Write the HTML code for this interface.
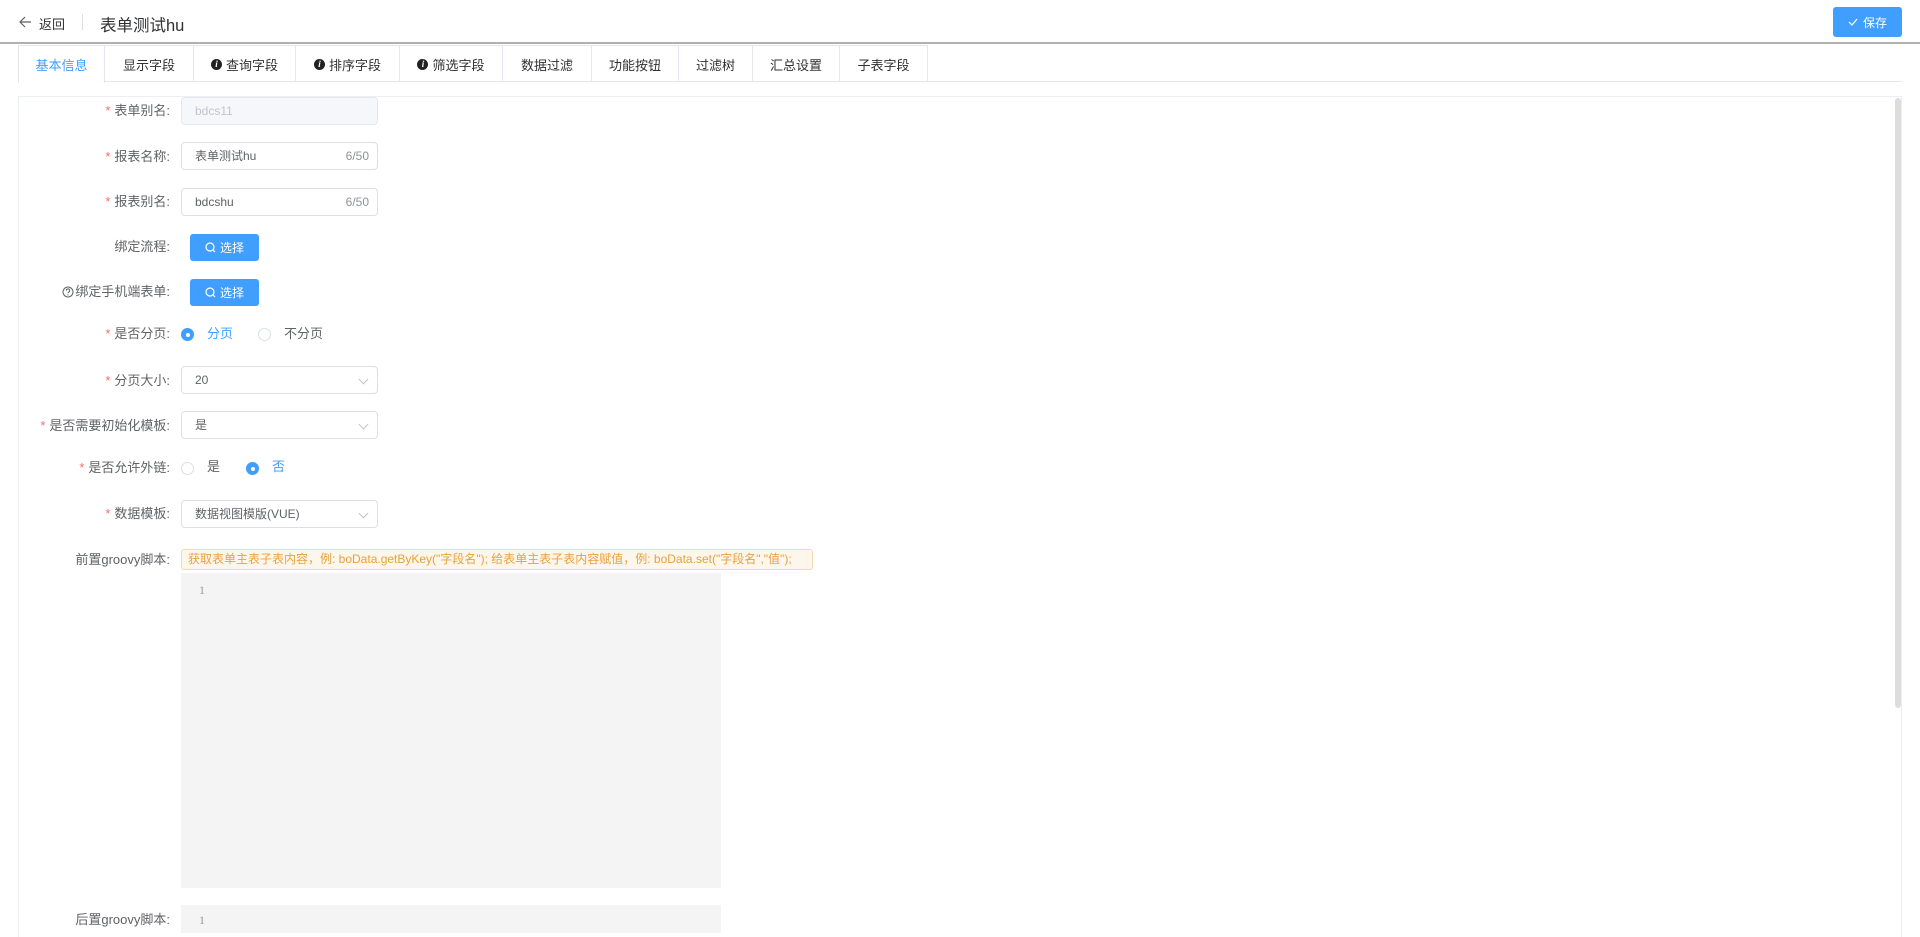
<!DOCTYPE html>
<html><head><meta charset="utf-8"><style>
*{box-sizing:border-box;margin:0;padding:0}
html,body{width:1920px;height:937px;overflow:hidden}
body{background:#fff;font-family:"Liberation Sans","Noto Sans CJK SC",sans-serif;color:#606266;font-size:13px;position:relative}
.a{position:absolute}
.hdr{left:0;top:0;width:1920px;height:44px;border-bottom:2px solid #b0b0b0}
.tabs{left:18px;top:45px;width:1884px;height:37px;border-bottom:1px solid #e4e7ed}
.tab{position:absolute;top:0;height:37px;border:1px solid #e4e7ed;border-bottom:none;border-left:none;display:flex;align-items:center;justify-content:center;font-size:13px;color:#303133}
.box{left:18px;top:96px;width:1884px;height:841px;border:1px solid #ebeef5;border-bottom:none}
.lbl{position:absolute;right:1750px;font-size:13px;color:#606266;white-space:nowrap;line-height:16px;display:flex;align-items:center}
.lbl i{color:#f56c6c;font-style:normal;margin-right:4px}
.inp{position:absolute;left:181px;width:197px;height:28px;border:1px solid #dcdfe6;border-radius:4px;padding-left:13px;line-height:26px;font-size:12px;color:#606266}
.cnt{position:absolute;right:8px;top:0;color:#909399;font-size:12px}
.btn{position:absolute;left:190px;width:69px;height:27px;background:#409eff;border-radius:3px;color:#fff;font-size:12px;display:flex;align-items:center;justify-content:center;gap:4px}
.rad{position:absolute;width:13px;height:13px;border-radius:50%;border:1px solid #dcdfe6;background:#fff}
.rad.on{border-color:#409eff;background:#409eff}
.rad.on:after{content:"";position:absolute;left:3.5px;top:3.5px;width:4px;height:4px;border-radius:50%;background:#fff}
.rt{position:absolute;font-size:13px;line-height:16px}
.chev{position:absolute;right:10px;top:9px;width:7px;height:7px;border-right:1px solid #c0c4cc;border-bottom:1px solid #c0c4cc;transform:rotate(45deg)}
.ed{position:absolute;left:181px;width:540px;background:#f4f4f4}
.ln{position:absolute;left:18px;font-family:"Liberation Serif",serif;color:#999;font-size:12px}
.ico{display:inline-block;width:11px;height:11px;border-radius:50%;background:#222;color:#fff;font-size:9px;font-weight:bold;font-style:italic;text-align:center;line-height:11px;margin-right:4px;font-family:"Liberation Serif",serif}
</style></head><body>
<div class="a hdr">
  <svg class="a" style="left:19px;top:16px" width="13" height="12" viewBox="0 0 13 12"><path d="M6 1L1 6l5 5M1 6h11" fill="none" stroke="#606266" stroke-width="1.2"/></svg>
  <div class="a" style="left:39px;top:14px;font-size:13px;color:#303133">返回</div>
  <div class="a" style="left:82px;top:14px;width:1px;height:16px;background:#dcdfe6"></div>
  <div class="a" style="left:100px;top:12px;font-size:16.5px;color:#303133">表单测试hu</div>
  <div class="a" style="left:1833px;top:7px;width:69px;height:30px;background:#409eff;border-radius:3px;color:#fff;font-size:12px;display:flex;align-items:center;justify-content:center;gap:5px"><svg width="10" height="8" viewBox="0 0 10 8"><path d="M1 4l3 3 5-6" fill="none" stroke="#fff" stroke-width="1.2"/></svg>保存</div>
</div>
<div class="a tabs">
  <div class="tab" style="left:0;width:87px;border-left:1px solid #e4e7ed;color:#409eff;height:38px;background:#fff">基本信息</div>
  <div class="tab" style="left:87px;width:89px">显示字段</div>
  <div class="tab" style="left:176px;width:102px"><span class="ico">i</span>查询字段</div>
  <div class="tab" style="left:278px;width:104px"><span class="ico">i</span>排序字段</div>
  <div class="tab" style="left:382px;width:103px"><span class="ico">i</span>筛选字段</div>
  <div class="tab" style="left:485px;width:89px">数据过滤</div>
  <div class="tab" style="left:574px;width:87px">功能按钮</div>
  <div class="tab" style="left:661px;width:74px">过滤树</div>
  <div class="tab" style="left:735px;width:87px">汇总设置</div>
  <div class="tab" style="left:822px;width:88px">子表字段</div>
</div>
<div class="a box"></div>
<div class="a" style="left:1895px;top:98px;width:6px;height:610px;background:#ddd;border-radius:3px"></div>

<div class="lbl" style="top:103px"><i>*</i>表单别名:</div>
<div class="inp" style="top:97px;background:#f5f7fa;border-color:#e4e7ed;color:#c0c4cc">bdcs11</div>
<div class="lbl" style="top:149px"><i>*</i>报表名称:</div>
<div class="inp" style="top:142px">表单测试hu<span class="cnt">6/50</span></div>
<div class="lbl" style="top:194px"><i>*</i>报表别名:</div>
<div class="inp" style="top:188px">bdcshu<span class="cnt">6/50</span></div>
<div class="lbl" style="top:239px">绑定流程:</div>
<div class="btn" style="top:234px"><svg width="11" height="11" viewBox="0 0 11 11"><circle cx="5" cy="5" r="4" fill="none" stroke="#fff" stroke-width="1.2"/><path d="M8 8l2 2" stroke="#fff" stroke-width="1.2"/></svg>选择</div>
<div class="lbl" style="top:284px"><svg width="12" height="12" viewBox="0 0 12 12" style="margin-right:1px"><circle cx="6" cy="6" r="5" fill="none" stroke="#606266" stroke-width="1"/><path d="M4.3 4.6a1.7 1.7 0 1 1 2.3 1.6c-.5.2-.6.5-.6 1.1" fill="none" stroke="#606266" stroke-width="1"/><circle cx="6" cy="8.8" r=".6" fill="#606266"/></svg>绑定手机端表单:</div>
<div class="btn" style="top:279px"><svg width="11" height="11" viewBox="0 0 11 11"><circle cx="5" cy="5" r="4" fill="none" stroke="#fff" stroke-width="1.2"/><path d="M8 8l2 2" stroke="#fff" stroke-width="1.2"/></svg>选择</div>
<div class="lbl" style="top:326px"><i>*</i>是否分页:</div>
<div class="rad on" style="left:181px;top:328px"></div><div class="rt" style="left:207px;top:326px;color:#409eff">分页</div>
<div class="rad" style="left:258px;top:328px"></div><div class="rt" style="left:284px;top:326px">不分页</div>
<div class="lbl" style="top:373px"><i>*</i>分页大小:</div>
<div class="inp" style="top:366px">20<span class="chev"></span></div>
<div class="lbl" style="top:418px"><i>*</i>是否需要初始化模板:</div>
<div class="inp" style="top:411px">是<span class="chev"></span></div>
<div class="lbl" style="top:460px"><i>*</i>是否允许外链:</div>
<div class="rad" style="left:181px;top:462px"></div><div class="rt" style="left:207px;top:459px">是</div>
<div class="rad on" style="left:246px;top:462px"></div><div class="rt" style="left:272px;top:459px;color:#409eff">否</div>
<div class="lbl" style="top:506px"><i>*</i>数据模板:</div>
<div class="inp" style="top:500px">数据视图模版(VUE)<span class="chev"></span></div>
<div class="lbl" style="top:552px">前置groovy脚本:</div>
<div class="a" style="left:181px;top:549px;width:632px;height:21px;border:1px solid #f5dab1;border-radius:3px;background:#fdf6ec;color:#e6a23c;font-size:12px;line-height:19px;padding-left:6px;white-space:nowrap">获取表单主表子表内容，例: boData.getByKey("字段名"); 给表单主表子表内容赋值，例: boData.set("字段名","值");</div>
<div class="ed" style="top:573px;height:315px"><div class="ln" style="top:10px">1</div></div>
<div class="lbl" style="top:912px">后置groovy脚本:</div>
<div class="ed" style="top:905px;height:28px"><div class="ln" style="top:8px">1</div></div>
</body></html>
